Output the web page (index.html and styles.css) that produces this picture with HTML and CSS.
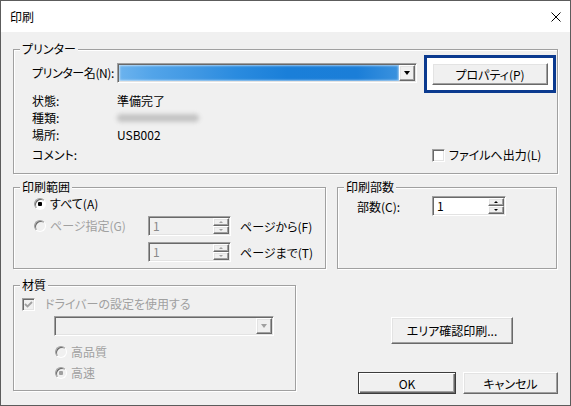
FILE: index.html
```html
<!DOCTYPE html>
<html lang="ja">
<head>
    <meta charset="UTF-8">
    <meta name="viewport" content="width=device-width, initial-scale=1.0">
    <title>印刷</title>
    <link rel="stylesheet" href="styles.css">
</head>
<body>

    <div class="window">
        <div class="titlebar">
            <span class="title">印刷</span>
            <svg class="close" width="10" height="10" viewBox="0 0 10 10">
                <path d="M0.5 0.5 L9.5 9.5 M9.5 0.5 L0.5 9.5" stroke="#000" stroke-width="1" fill="none"/>
            </svg>
        </div>

        <div class="dialog">
            <!-- プリンター -->
            <div class="group printer">
                <div class="group-title">プリンター</div>
                <div class="group-body printer-body">
                    <div class="name-row">
                        <span class="field-label">プリンター名(N):</span>
                        <div class="combo sunken printer-combo">
                            <span class="combo-value selected"></span>
                            <span class="drop-btn raised"><span class="arrow-down"></span></span>
                        </div>
                        <button class="btn prop-btn">プロパティ(P)</button>
                    </div>
                    <div class="info-row first"><span class="field-label">状態:</span><span>準備完了</span></div>
                    <div class="info-row"><span class="field-label">種類:</span><span class="blurred"></span></div>
                    <div class="info-row"><span class="field-label">場所:</span><span>USB002</span></div>
                    <div class="comment-row">
                        <span class="field-label comment-label">コメント:</span>
                        <span class="checkbox sunken"></span>
                        <span class="check-text">ファイルへ出力(L)</span>
                    </div>
                </div>
            </div>

            <div class="mid-row">
                <!-- 印刷範囲 -->
                <div class="group range">
                    <div class="group-title">印刷範囲</div>
                    <div class="group-body range-body">
                        <div class="radio-row">
                            <span class="radio sunken checked"></span>
                            <span class="radio-text">すべて(A)</span>
                        </div>
                        <div class="page-row first">
                            <div class="page-choice">
                                <span class="radio sunken disabled"></span>
                                <span class="radio-text disabled-text">ページ指定(G)</span>
                            </div>
                            <div class="spinbox sunken disabled range-spin">
                                <span class="spin-value">1</span>
                                <span class="spin">
                                    <span class="spin-btn raised"><span class="arrow-up"></span></span>
                                    <span class="spin-btn raised"><span class="arrow-dn"></span></span>
                                </span>
                            </div>
                            <span class="page-text">ページから(F)</span>
                        </div>
                        <div class="page-row second">
                            <div class="page-choice"></div>
                            <div class="spinbox sunken disabled range-spin">
                                <span class="spin-value">1</span>
                                <span class="spin">
                                    <span class="spin-btn raised"><span class="arrow-up"></span></span>
                                    <span class="spin-btn raised"><span class="arrow-dn"></span></span>
                                </span>
                            </div>
                            <span class="page-text">ページまで(T)</span>
                        </div>
                    </div>
                </div>

                <!-- 印刷部数 -->
                <div class="group copies">
                    <div class="group-title">印刷部数</div>
                    <div class="group-body copies-body">
                        <div class="copies-row">
                            <span class="copies-label">部数(C):</span>
                            <div class="spinbox sunken copies-spin">
                                <span class="spin-value">1</span>
                                <span class="spin">
                                    <span class="spin-btn raised"><span class="arrow-up"></span></span>
                                    <span class="spin-btn raised"><span class="arrow-dn"></span></span>
                                </span>
                            </div>
                        </div>
                    </div>
                </div>
            </div>

            <div class="bottom-row">
                <!-- 材質 -->
                <div class="group material">
                    <div class="group-title">材質</div>
                    <div class="group-body material-body">
                        <div class="check-row">
                            <span class="checkbox sunken disabled">
                                <svg width="9" height="9" viewBox="0 0 9 9">
                                    <path d="M1 4 L3.5 6.5 L8 2" stroke="#a0a0a0" stroke-width="1.8" fill="none"/>
                                </svg>
                            </span>
                            <span class="check-text disabled-text">ドライバーの設定を使用する</span>
                        </div>
                        <div class="combo sunken disabled material-combo">
                            <span class="combo-value"></span>
                            <span class="drop-btn raised"><span class="arrow-down grey"></span></span>
                        </div>
                        <div class="radio-row quality first">
                            <span class="radio sunken disabled"></span>
                            <span class="radio-text disabled-text">高品質</span>
                        </div>
                        <div class="radio-row quality second">
                            <span class="radio sunken disabled checked"></span>
                            <span class="radio-text disabled-text">高速</span>
                        </div>
                    </div>
                </div>

                <div class="actions">
                    <button class="btn area-btn">エリア確認印刷...</button>
                    <div class="ok-row">
                        <button class="btn default ok-btn">OK</button>
                        <button class="btn cancel-btn">キャンセル</button>
                    </div>
                </div>
            </div>
        </div>
    </div>

</body>
</html>
```

FILE: styles.css
```css
* { box-sizing: border-box; }
body {
    margin: 0;
    font-family: "Noto Sans CJK JP", "Noto Sans", sans-serif;
    font-size: 12px;
    color: #000;
    font-feature-settings: "palt" 1;
    white-space: nowrap;
}
.window { width: 571px; height: 406px; border: 1px solid #5c5c5c; background: #f0f0f0; display: flex; flex-direction: column; }
.titlebar { height: 31px; flex: none; background: #fff; display: flex; align-items: center; justify-content: space-between; padding: 0 9px; }
.title { line-height: 16px; }
.dialog { padding: 17px 12px 0 12px; }

/* 3D borders, classic look */
.sunken {
    border: 1px solid;
    border-color: #a0a0a0 #fff #fff #a0a0a0;
    box-shadow: inset 1px 1px 0 #696969, inset -1px -1px 0 #e3e3e3;
}
.raised {
    border: 1px solid;
    border-color: #fff #696969 #696969 #fff;
    box-shadow: inset -1px -1px 0 #a0a0a0, inset 1px 1px 0 #e3e3e3;
    background: #f0f0f0;
}

/* group boxes */
.group { border: 1px solid #a0a0a0; box-shadow: inset 1px 1px 0 #fff, 1px 1px 0 #fff; }
.group-title { display: table; margin: -9px 0 0 6px; padding: 0 2px; background: #f0f0f0; line-height: 16px; }

.printer-body { padding: 6px 8px 8px 18px; }
.name-row { display: flex; align-items: flex-start; height: 22px; }
.field-label { width: 85px; line-height: 20px; flex: none; }
.name-row .field-label { letter-spacing: -0.4px; }
.printer-combo { width: 300px; height: 20px; flex: none; }
.combo { display: flex; padding: 1px; background: #fff; }
.combo-value { flex: 1; }
.combo-value.selected {
    background: linear-gradient(90deg, #6cb3ee 0%, #52a4e9 12%, #3f97e3 28%, #2a8bdf 42%, #1a7fd9 60%, #1b7ed8 85%, #3b92de 100%);
    box-shadow: inset 0 0 2px 1px rgba(255,255,255,0.55);
}
.combo.disabled { background: #f0f0f0; }
.drop-btn { width: 16px; display: flex; align-items: center; justify-content: center; }
.arrow-down { width: 0; height: 0; border-left: 3.5px solid transparent; border-right: 3.5px solid transparent; border-top: 4px solid #000; }
.arrow-down.grey { border-top-color: #a0a0a0; }

.btn {
    font: inherit;
    font-feature-settings: "palt" 1;
    color: #000;
    padding: 0;
    border: 1px solid;
    border-color: #fff #696969 #696969 #fff;
    box-shadow: inset -1px -1px 0 #a0a0a0, inset 1px 1px 0 #e3e3e3;
    background: #f0f0f0;
}
.prop-btn {
    width: 116px; height: 22px; margin-left: 15px; flex: none;
    box-shadow: inset -1px -1px 0 #a0a0a0, inset 1px 1px 0 #e3e3e3, 0 0 0 5px #fff;
    outline: 3px solid #0b3a8f;
    outline-offset: 5px;
}
.info-row { display: flex; line-height: 17px; }
.info-row .field-label { line-height: 17px; }
.info-row.first { margin-top: 7px; }
.blurred { display: inline-block; width: 82px; height: 8px; margin-top: 5px; border-radius: 4px; background: #c4c4c4; filter: blur(2px); }
.comment-row { display: flex; align-items: center; height: 20px; margin-top: 2px; }
.comment-label { width: 400px; }
.checkbox { width: 13px; height: 13px; background: #fff; flex: none; display: flex; align-items: center; justify-content: center; }
.checkbox.disabled { background: #f0f0f0; }
.check-text { margin-left: 4px; line-height: 16px; }
.disabled-text { color: #a0a0a0; }

.mid-row { display: flex; margin-top: 13px; }
.range { width: 313px; height: 82px; margin-right: 11px; }
.copies { width: 220px; height: 82px; }
.range-body { padding: 1px 0 0 20px; }
.radio-row { display: flex; align-items: center; height: 16px; }
.radio {
    width: 12px; height: 12px; border-radius: 50%; flex: none;
    box-shadow: inset 1px 1px 0 #696969;
    background: #fff;
}
.radio.checked { background: radial-gradient(circle, #000 2px, #fff 2.5px); }
.radio.disabled { background: #f0f0f0; }
.radio.disabled.checked { background: radial-gradient(circle, #a0a0a0 2px, #f0f0f0 2.5px); }
.radio-text { margin-left: 4px; line-height: 16px; }
.page-row { display: flex; align-items: center; height: 20px; }
.page-row.first { margin-top: 4px; }
.page-row.second { margin-top: 6px; }
.page-choice { width: 114px; display: flex; align-items: center; flex: none; }
.spinbox { display: flex; padding: 1px; background: #fff; height: 20px; flex: none; }
.spinbox.disabled { background: #f0f0f0; color: #8a8a8a; }
.range-spin { width: 83px; }
.copies-spin { width: 74px; }
.spin-value { flex: 1; padding-left: 3px; line-height: 16px; }
.spin { width: 16px; display: flex; flex-direction: column; }
.spin-btn { flex: 1; display: flex; align-items: center; justify-content: center; }
.arrow-up { width: 0; height: 0; border-left: 2px solid transparent; border-right: 2px solid transparent; border-bottom: 2px solid #000; }
.arrow-dn { width: 0; height: 0; border-left: 2px solid transparent; border-right: 2px solid transparent; border-top: 2px solid #000; }
.spinbox.disabled .arrow-up { border-bottom-color: #a0a0a0; }
.spinbox.disabled .arrow-dn { border-top-color: #a0a0a0; }
.page-text { margin-left: 9px; }

.copies-body { padding: 1px 0 0 19px; }
.copies-row { display: flex; align-items: center; height: 20px; }
.copies-label { width: 75px; flex: none; }

.bottom-row { display: flex; margin-top: 16px; }
.material { width: 283px; height: 106px; flex: none; }
.material-body { padding: 1px 0 0 8px; }
.check-row { display: flex; align-items: center; height: 20px; }
.check-row .check-text { margin-left: 10px; }
.material-combo { width: 220px; height: 20px; margin: 2px 0 0 32px; }
.radio-row.quality { margin-left: 33px; }
.radio-row.quality.first { margin-top: 8px; }
.radio-row.quality.second { margin-top: 5px; }

.actions { flex: 1; }
.area-btn { width: 122px; height: 27px; margin: 32px 0 0 95px; display: block; }
.ok-row { display: flex; margin: 28px 0 0 62px; }
.ok-btn { width: 98px; height: 22px; }
.btn.default {
    border: 1px solid #3c3c3c;
    box-shadow: inset 1px 1px 0 #fff, inset -1px -1px 0 #696969, inset -2px -2px 0 #a0a0a0;
}
.cancel-btn { width: 95px; height: 22px; margin-left: 7px; }
```
